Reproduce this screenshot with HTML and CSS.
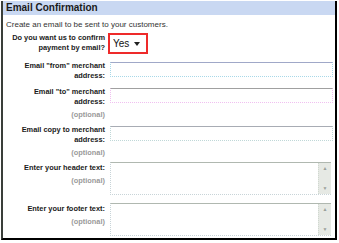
FILE: index.html
```html
<!DOCTYPE html>
<html lang="en">
<head>
    <meta charset="UTF-8">
    <title>Email Confirmation</title>
    <link rel="stylesheet" href="styles.css">
</head>
<body>
    <div class="panel">
        <div class="panel-head">Email Confirmation</div>
        <p class="intro">Create an email to be sent to your customers.</p>
        <form class="rows">
            <div class="row row-select">
                <label class="lbl" for="confirm">Do you want us to confirm<br>payment by email?</label>
                <div class="field">
                    <div class="select-wrap">
                        <select id="confirm">
                            <option>Yes</option>
                            <option>No</option>
                        </select>
                    </div>
                </div>
            </div>

            <div class="row row-from">
                <label class="lbl" for="from">Email "from" merchant<br>address:</label>
                <div class="field"><input type="text" id="from" class="focus"></div>
            </div>

            <div class="row row-to">
                <label class="lbl" for="to">Email "to" merchant<br>address:<span class="opt">(optional)</span></label>
                <div class="field"><input type="text" id="to" class="pink"></div>
            </div>

            <div class="row row-copy">
                <label class="lbl" for="copy">Email copy to merchant<br>address:<span class="opt">(optional)</span></label>
                <div class="field"><input type="text" id="copy"></div>
            </div>

            <div class="row row-text">
                <label class="lbl" for="header">Enter your header text:<span class="opt">(optional)</span></label>
                <div class="field">
                    <div class="ta-box">
                        <textarea id="header"></textarea>
                        <div class="sb"><span>&#9650;</span><span>&#9660;</span></div>
                    </div>
                </div>
            </div>

            <div class="row row-text">
                <label class="lbl" for="footer">Enter your footer text:<span class="opt">(optional)</span></label>
                <div class="field">
                    <div class="ta-box">
                        <textarea id="footer"></textarea>
                        <div class="sb"><span>&#9650;</span><span>&#9660;</span></div>
                    </div>
                </div>
            </div>
        </form>
    </div>
</body>
</html>
```

FILE: styles.css
```css
body {
    margin: 0;
    background: #ffffff;
    font-family: 'Liberation Sans', Arial, sans-serif;
    color: #222222;
}
.panel {
    width: 332px;
    height: 237px;
    margin: 1px 0 0 1px;
    border-left: 2px solid #3a3f3a;
    border-right: 2px solid #000000;
    border-bottom: 2px solid #000000;
    overflow: hidden;
}
.panel-head {
    height: 14px;
    background-color: #c9d8f2;
    font-size: 10px;
    font-weight: bold;
    line-height: 14px;
    padding-left: 3px;
    color: #1a1a1a;
}
.intro {
    margin: 5px 0 3px 3px;
    font-size: 8px;
    line-height: 10px;
    color: #333333;
}
.rows {
    display: flex;
    flex-direction: column;
}
.row {
    display: flex;
    align-items: flex-start;
}
.lbl {
    width: 102px;
    flex: none;
    text-align: right;
    font-size: 7.4px;
    line-height: 10px;
    font-weight: bold;
    color: #1a1a1a;
    white-space: nowrap;
}
.opt {
    display: block;
    margin-top: 3px;
    color: #9a9a9a;
}
.field {
    flex: 1;
    padding: 1px 2px 0 5px;
}
.row-select {
    margin-bottom: 7px;
}
.row-from {
    margin-bottom: 6px;
}
.row-to {
    margin-bottom: 5px;
}
.row-copy {
    margin-bottom: 4px;
}
.row-text {
    margin-bottom: 8px;
}
.row-select .field {
    padding: 0 0 0 3px;
}
.row-text .lbl {
    padding-top: 1px;
}
.row-text .field {
    padding: 0 4px 0 5px;
}

/* select with red highlight */
.select-wrap {
    position: relative;
    width: 40px;
    height: 21px;
    box-sizing: border-box;
    border: 2px solid #ee2a2a;
    background: #ffffff;
}
.select-wrap::after {
    content: "";
    position: absolute;
    right: 6px;
    top: 7px;
    border-left: 3px solid transparent;
    border-right: 3px solid transparent;
    border-top: 4px solid #222222;
    pointer-events: none;
}
select {
    appearance: none;
    -webkit-appearance: none;
    display: block;
    font-family: 'Liberation Sans', Arial, sans-serif;
    font-size: 10px;
    width: 28px;
    height: 17px;
    border: none;
    background: transparent;
    color: #111111;
    padding: 0 0 0 3px;
    margin: 0;
    outline: none;
}

input {
    display: block;
    width: 100%;
    height: 15px;
    box-sizing: border-box;
    border: 1px dotted #c0d8d8;
    border-top: 1px solid #a8acb4;
    font-size: 9px;
    padding: 0 3px;
    margin: 0;
}
input.focus {
    border: 1px dotted #a8d8e8;
    border-top: 1px solid #a0a8c8;
}
input.pink {
    border: 1px dotted #f0c0f0;
    border-top: 1px solid #a0a0a0;
}

/* textarea with a light scroll strip */
.ta-box {
    display: flex;
    height: 33px;
    box-sizing: border-box;
    border: 1px dotted #c8d4d8;
    border-top: 1px solid #b0b8b0;
    border-right: none;
}
textarea {
    flex: 1;
    border: none;
    resize: none;
    overflow: hidden;
    padding: 0;
    margin: 0;
    font-size: 9px;
    font-family: 'Liberation Sans', Arial, sans-serif;
}
.sb {
    width: 12px;
    display: flex;
    flex-direction: column;
    justify-content: space-between;
    align-items: center;
    background-color: #e6e9e4;
    border-left: 1px dotted #d0d8d0;
    color: #9aa09a;
    font-size: 5px;
    line-height: 9px;
    padding: 1px 0;
}
```
